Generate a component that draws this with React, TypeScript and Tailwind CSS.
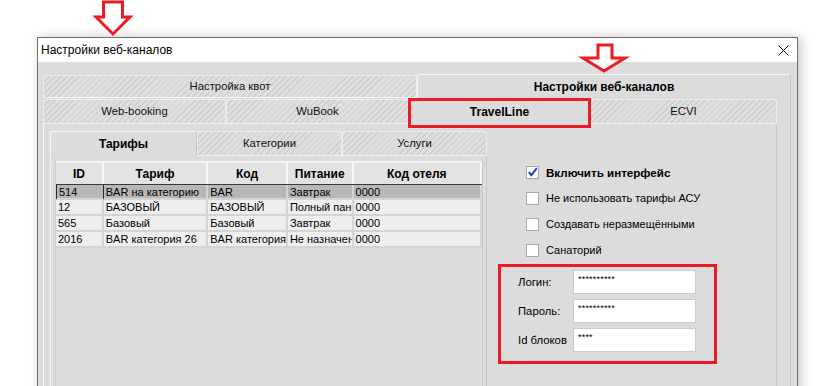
import React from "react";

const hatch =
  "bg-[image:repeating-linear-gradient(135deg,#dedede_0px,#dedede_3.2px,#cfcfcf_3.2px,#cfcfcf_4.3px)]";

function Tab({
  label,
  w,
  selected,
  h,
}: {
  label: string;
  w?: number;
  selected?: boolean;
  h: string;
}) {
  const base = `${h} flex items-center justify-center whitespace-nowrap rounded-t-[3px] border-l border-t border-r `;
  if (selected) {
    return (
      <div
        className={base + "flex-1 bg-[#dcdcdc] border-l-[#f8f8f8] border-t-[#f8f8f8] border-r-[#c4c4c4] font-bold text-[12px]"}
        style={w ? { width: w, flex: "none" } : undefined}
      >
        {label}
      </div>
    );
  }
  return (
    <div
      className={base + hatch + " border-[#ececec] border-b border-b-[#f4f4f4] text-[#111] text-[11.3px]"}
      style={{ width: w, flex: "none" }}
    >
      {label}
    </div>
  );
}

const cols = [48, 105, 80, 66, 129];
const headers = ["ID", "Тариф", "Код", "Питание", "Код отеля"];
const rows = [
  ["514", "BAR на категорию", "BAR", "Завтрак", "0000"],
  ["12", "БАЗОВЫЙ", "БАЗОВЫЙ", "Полный пансион", "0000"],
  ["565", "Базовый", "Базовый", "Завтрак", "0000"],
  ["2016", "BAR категория 26", "BAR категория 26", "Не назначено", "0000"],
];

function Checkbox({ checked, label, bold }: { checked?: boolean; label: string; bold?: boolean }) {
  return (
    <div className="flex items-center gap-[7px] h-[13px]">
      <div className="w-[13px] h-[13px] bg-white border border-[#a9a9a9] relative shrink-0">
        {checked && (
          <svg width="11" height="11" viewBox="0 0 11 11" className="absolute left-0 top-0">
            <path d="M1.8 5.2 L4.3 8.2 L9.8 1.2" stroke="#1c3fd8" strokeWidth="2" fill="none" />
          </svg>
        )}
      </div>
      <span className={bold ? "font-bold text-[11.6px]" : "text-[11px]"}>{label}</span>
    </div>
  );
}

function Field({ label, value }: { label: string; value: string }) {
  return (
    <div className="flex items-center h-[24px]">
      <span className="w-[55px] text-[11.3px]">{label}</span>
      <div className="w-[123px] h-[24px] bg-white border border-[#cccccc] pl-[4px] pt-[4px] text-[9px] leading-[9px] tracking-[0.2px]">
        {value}
      </div>
    </div>
  );
}

export default function App() {
  return (
    <div className="relative w-[818px] h-[386px] overflow-hidden bg-white font-['Liberation_Sans',Arial,sans-serif] text-[11px] text-black">
      <div className="ml-[37px] mt-[37px] w-[761px] h-[360px] border border-[#6f6f6f] shadow-[3px_0_10px_rgba(0,0,0,0.22)] flex flex-col">
        <div className="h-[24px] bg-white flex items-center justify-between pl-[3px] pr-[8px] shrink-0">
          <span className="text-[12px]">Настройки веб-каналов</span>
          <svg width="11" height="11" viewBox="0 0 11 11">
            <path d="M0.5 0.5 L10.5 10.5 M10.5 0.5 L0.5 10.5" stroke="#111" strokeWidth="1" />
          </svg>
        </div>
        <div className="flex-1 bg-[#dcdcdc] pt-[12px] pl-[5px] pr-[6px] flex flex-col min-h-0">
          {/* outer tabs */}
          <div className="flex h-[24px] items-end shrink-0">
            <Tab label="Настройка квот" w={374} h="h-[23px]" />
            <Tab label="Настройки веб-каналов" selected h="h-[24px]" />
          </div>
          {/* outer page */}
          <div className="flex-1 border-r border-[#c6c6c6] flex flex-col min-h-0">
            <div className="w-[734px] flex-1 flex flex-col pt-[1px] min-h-0">
              <div className="flex h-[25px] shrink-0">
                <Tab label="Web-booking" w={183} h="h-[25px]" />
                <Tab label="WuBook" w={183} h="h-[25px]" />
                <Tab label="TravelLine" w={181} selected h="h-[25px]" />
                <Tab label="ECVI" w={187} h="h-[25px]" />
              </div>
              {/* TravelLine page */}
              <div className="flex-1 border-l border-l-[#f6f6f6] border-r border-r-[#c6c6c6] flex pl-[6px] pt-[7px] min-h-0">
                <div className="w-[437px] flex flex-col">
                  <div className="flex h-[25px] shrink-0">
                    <Tab label="Тарифы" w={147} selected h="h-[25px]" />
                    <Tab label="Категории" w={145} h="h-[25px]" />
                    <Tab label="Услуги" w={145} h="h-[25px]" />
                  </div>
                  <div className="flex-1 border-l border-l-[#f6f6f6] border-r border-r-[#c6c6c6] pl-[4px] pt-[5px]">
                    <div className="w-[428px] h-[300px] border-l border-[#cfcfcf] border-r border-r-[#c8c8c8] flex flex-col">
                      <div className="flex h-[23px] bg-[#e2e2e2]">
                        {headers.map((h, i) => (
                          <div
                            key={h}
                            style={{ width: cols[i] }}
                            className="h-full flex items-center justify-center font-bold text-[12px] border-r-2 border-r-[#f6f6f6] border-t-2 border-t-[#f3f3f3]"
                          >
                            {h}
                          </div>
                        ))}
                      </div>
                      {rows.map((r, ri) => (
                        <div
                          key={ri}
                          className={
                            "flex h-[16px] " +
                            (ri === 0 ? "bg-[#b7b7b7] border-t border-[#3a3a3a]" : "bg-[#eeeeee]")
                          }
                        >
                          {r.map((c, ci) => (
                            <div
                              key={ci}
                              style={{ width: cols[ci] }}
                              className={
                                "h-full overflow-hidden whitespace-nowrap pl-[2px] leading-[15px] border-b-2 border-b-[#d4d4d4] " +
                                (ri === 0
                                  ? ci === 0
                                    ? "border-l border-l-[#2a2a2a] border-r border-r-[#2a2a2a]"
                                    : "border-r-2 border-r-[#d4d4d4]"
                                  : "border-r-2 border-r-[#d4d4d4]")
                              }
                            >
                              {c}
                            </div>
                          ))}
                        </div>
                      ))}
                    </div>
                  </div>
                </div>
                {/* right column */}
                <div className="flex-1 flex flex-col pt-[35px]">
                  <div className="pl-[39px] flex flex-col gap-[13px]">
                    <Checkbox checked bold label="Включить интерфейс" />
                    <Checkbox label="Не использовать тарифы АСУ" />
                    <Checkbox label="Создавать неразмещёнными" />
                    <Checkbox label="Санаторий" />
                  </div>
                  <div className="ml-[11px] mt-[7px] w-[219px] h-[100px] border-[3px] border-[#ed1c24] pt-[3px] pl-[17px] flex flex-col gap-[5px]">
                    <Field label="Логин:" value="**********" />
                    <Field label="Пароль:" value="**********" />
                    <Field label="Id блоков" value="****" />
                  </div>
                </div>
              </div>
            </div>
          </div>
        </div>
      </div>

      {/* annotations */}
      <div className="absolute left-[408px] top-[98px] w-[183px] h-[30px] border-[3px] border-[#ed1c24]" />
      <svg className="absolute left-0 top-0" width="818" height="386" viewBox="0 0 818 386">
        <polygon
          points="103.5,2 122.5,2 122.5,17 130,17 113,34 96,17 103.5,17"
          fill="white"
          stroke="#ed1c24"
          strokeWidth="3"
        />
        <polygon
          points="598,45 612,45 612,58 625,58 604,71 583,58 598,58"
          fill="white"
          stroke="#ed1c24"
          strokeWidth="3"
        />
      </svg>
    </div>
  );
}
